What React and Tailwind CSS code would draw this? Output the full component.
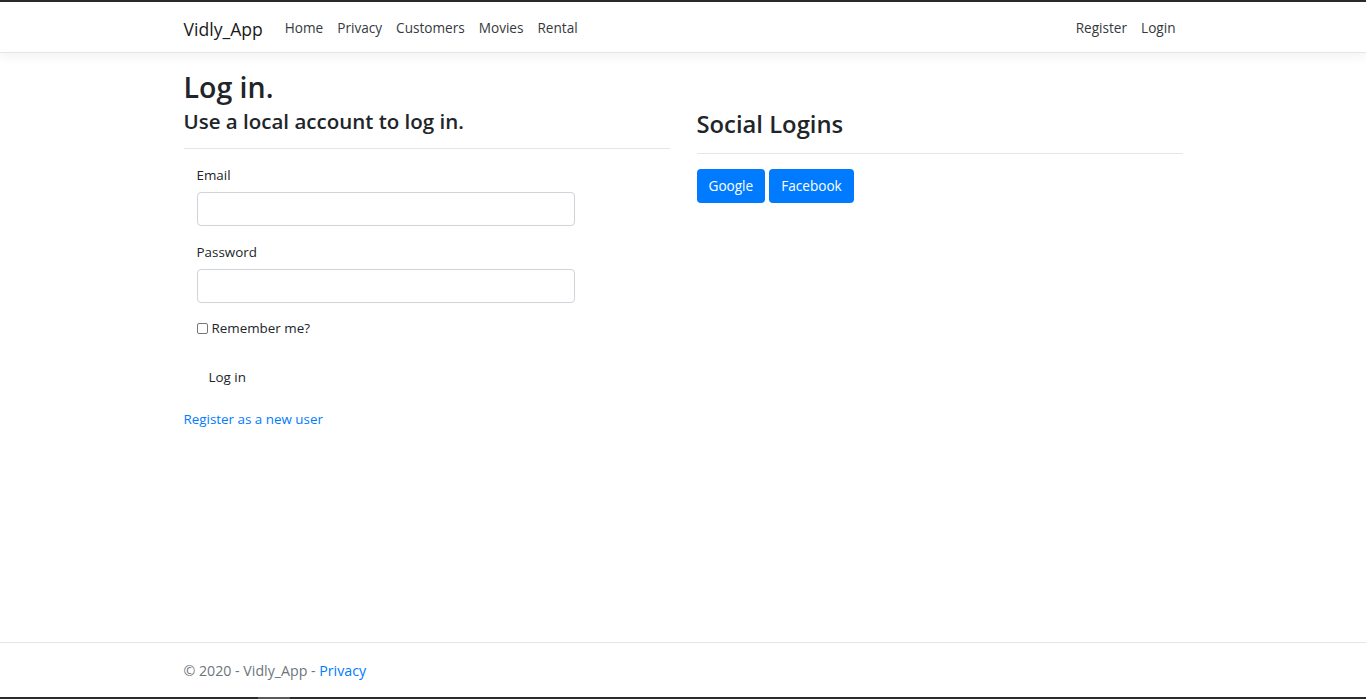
export default function App() {
  const font = { fontFamily: '"Open Sans", "Noto Sans", Arial, sans-serif' };
  return (
    <div className="min-h-[699px] h-[699px] flex flex-col bg-white text-[#212529]" style={font}>
      <div className="h-[2px] bg-[#2b2b2b] shrink-0" />
      <header className="h-[51px] shrink-0 bg-white border-b border-[#e5e5e5] shadow-[0_4px_11px_rgba(0,0,0,0.05)] relative z-10">
        <div className="w-[999px] mx-auto h-full flex items-center pt-[3px]">
          <a className="text-[17.6px] text-[#1a1a1a] mr-[15px] leading-[26px]">Vidly_App</a>
          <nav className="flex items-center text-[13.6px] text-[#343a40]">
            <a className="px-[7px]">Home</a>
            <a className="px-[7px]">Privacy</a>
            <a className="px-[7px]">Customers</a>
            <a className="px-[7px]">Movies</a>
            <a className="px-[7px]">Rental</a>
          </nav>
          <nav className="ml-auto flex items-center text-[13.6px] text-[#343a40]">
            <a className="px-[7px]">Register</a>
            <a className="px-[7px]">Login</a>
          </nav>
        </div>
      </header>
      <main className="flex-1 w-[999px] mx-auto pt-[13px]">
        <h1 className="text-[28.5px] leading-[43px] font-semibold -mb-[1px]">Log in.</h1>
        <div className="grid grid-cols-2 gap-x-[27px]">
          <section>
            <h4 className="text-[20.5px] leading-[26px] font-semibold">Use a local account to log in.</h4>
            <hr className="mt-[14px] mb-[15px] border-t border-[#e6e6e6]" />
            <div className="pl-[13px] w-[391px] text-[13.4px]">
              <div className="mb-[15px]">
                <label className="block leading-[22px] mb-[6px]">Email</label>
                <div className="h-[34px] border border-[#ced4da] rounded-[4px] bg-white" />
              </div>
              <div className="mb-[14px]">
                <label className="block leading-[22px] mb-[6px]">Password</label>
                <div className="h-[34px] border border-[#ced4da] rounded-[4px] bg-white" />
              </div>
              <div className="mb-[21px] flex items-center leading-[22px]">
                <span className="w-[11px] h-[11px] border border-[#767676] rounded-[2px] mr-[4px] bg-white" />
                <span>Remember me?</span>
              </div>
              <div className="mb-[14px]">
                <button className="h-[34px] px-[11px] border border-transparent rounded-[4px] leading-[22px] text-[#212529]">Log in</button>
              </div>
            </div>
            <p className="text-[13.4px] leading-[22px]">
              <a className="text-[#007bff]">Register as a new user</a>
            </p>
          </section>
          <section className="pt-[1px]">
            <h3 className="text-[23.8px] leading-[30px] font-semibold">Social Logins</h3>
            <hr className="mt-[14px] mb-[15px] border-t border-[#e6e6e6]" />
            <div className="flex gap-[4px]">
              <button className="h-[34px] px-[12px] bg-[#007bff] text-white rounded-[4px] text-[13.6px] leading-[22px]">Google</button>
              <button className="h-[34px] px-[12px] bg-[#007bff] text-white rounded-[4px] text-[13.6px] leading-[22px]">Facebook</button>
            </div>
          </section>
        </div>
      </main>
      <footer className="h-[55px] shrink-0 border-t border-[#e5e5e5]">
        <div className="w-[999px] mx-auto leading-[56px] text-[14.2px] text-[#6c757d] whitespace-nowrap">
          © 2020 - Vidly_App - <a className="text-[#007bff]">Privacy</a>
        </div>
      </footer>
      <div className="h-[2px] shrink-0 flex">
        <div className="w-[258px] bg-[#2b2b2b]" />
        <div className="w-[32px] bg-[#5a5a5a]" />
        <div className="flex-1 bg-[#2b2b2b]" />
      </div>
    </div>
  );
}
